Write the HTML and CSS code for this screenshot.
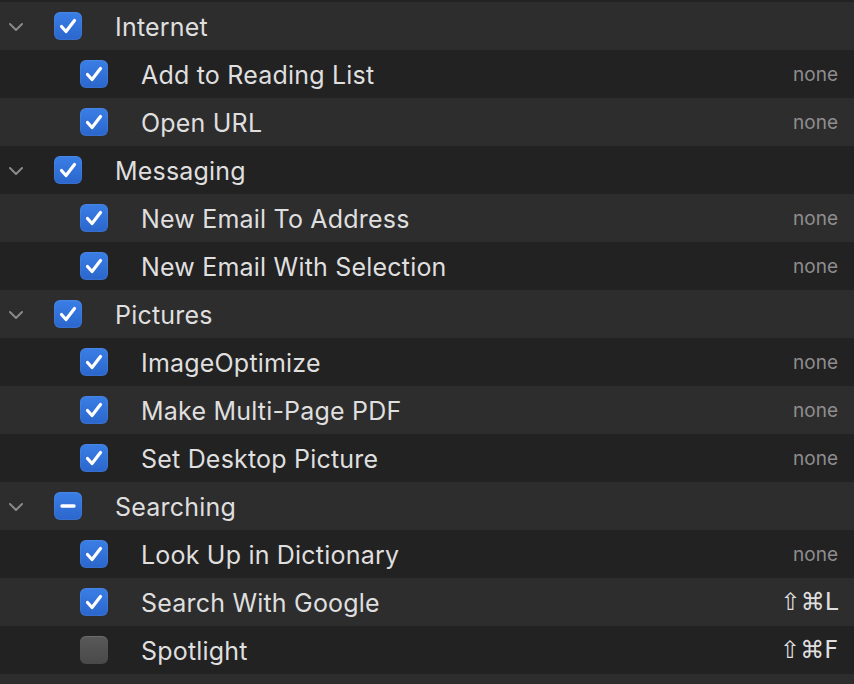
FILE: index.html
```html
<!DOCTYPE html>
<html>
<head>
<meta charset="utf-8">
<link rel="stylesheet" href="styles.css">
</head>
<body>
<div class="list">
  <div class="row light group">
    <svg class="chev" viewBox="0 0 16 10" width="16" height="10"><path d="M2 2 L8 8 L14 2" fill="none" stroke="#8a8a8a" stroke-width="2" stroke-linecap="round" stroke-linejoin="round"/></svg>
    <span class="cb on"><svg viewBox="0 0 28 28"><path d="M7.5 14.5 L12 19.5 L20.5 8.5" fill="none" stroke="#fff" stroke-width="3.2" stroke-linecap="round" stroke-linejoin="round"/></svg></span>
    <span class="label">Internet</span>
  </div>
  <div class="row dark child">
    <span class="cb on"><svg viewBox="0 0 28 28"><path d="M7.5 14.5 L12 19.5 L20.5 8.5" fill="none" stroke="#fff" stroke-width="3.2" stroke-linecap="round" stroke-linejoin="round"/></svg></span>
    <span class="label">Add to Reading List</span>
    <span class="key none">none</span>
  </div>
  <div class="row light child">
    <span class="cb on"><svg viewBox="0 0 28 28"><path d="M7.5 14.5 L12 19.5 L20.5 8.5" fill="none" stroke="#fff" stroke-width="3.2" stroke-linecap="round" stroke-linejoin="round"/></svg></span>
    <span class="label">Open URL</span>
    <span class="key none">none</span>
  </div>
  <div class="row dark group">
    <svg class="chev" viewBox="0 0 16 10" width="16" height="10"><path d="M2 2 L8 8 L14 2" fill="none" stroke="#8a8a8a" stroke-width="2" stroke-linecap="round" stroke-linejoin="round"/></svg>
    <span class="cb on"><svg viewBox="0 0 28 28"><path d="M7.5 14.5 L12 19.5 L20.5 8.5" fill="none" stroke="#fff" stroke-width="3.2" stroke-linecap="round" stroke-linejoin="round"/></svg></span>
    <span class="label">Messaging</span>
  </div>
  <div class="row light child">
    <span class="cb on"><svg viewBox="0 0 28 28"><path d="M7.5 14.5 L12 19.5 L20.5 8.5" fill="none" stroke="#fff" stroke-width="3.2" stroke-linecap="round" stroke-linejoin="round"/></svg></span>
    <span class="label">New Email To Address</span>
    <span class="key none">none</span>
  </div>
  <div class="row dark child">
    <span class="cb on"><svg viewBox="0 0 28 28"><path d="M7.5 14.5 L12 19.5 L20.5 8.5" fill="none" stroke="#fff" stroke-width="3.2" stroke-linecap="round" stroke-linejoin="round"/></svg></span>
    <span class="label">New Email With Selection</span>
    <span class="key none">none</span>
  </div>
  <div class="row light group">
    <svg class="chev" viewBox="0 0 16 10" width="16" height="10"><path d="M2 2 L8 8 L14 2" fill="none" stroke="#8a8a8a" stroke-width="2" stroke-linecap="round" stroke-linejoin="round"/></svg>
    <span class="cb on"><svg viewBox="0 0 28 28"><path d="M7.5 14.5 L12 19.5 L20.5 8.5" fill="none" stroke="#fff" stroke-width="3.2" stroke-linecap="round" stroke-linejoin="round"/></svg></span>
    <span class="label">Pictures</span>
  </div>
  <div class="row dark child">
    <span class="cb on"><svg viewBox="0 0 28 28"><path d="M7.5 14.5 L12 19.5 L20.5 8.5" fill="none" stroke="#fff" stroke-width="3.2" stroke-linecap="round" stroke-linejoin="round"/></svg></span>
    <span class="label">ImageOptimize</span>
    <span class="key none">none</span>
  </div>
  <div class="row light child">
    <span class="cb on"><svg viewBox="0 0 28 28"><path d="M7.5 14.5 L12 19.5 L20.5 8.5" fill="none" stroke="#fff" stroke-width="3.2" stroke-linecap="round" stroke-linejoin="round"/></svg></span>
    <span class="label">Make Multi-Page PDF</span>
    <span class="key none">none</span>
  </div>
  <div class="row dark child">
    <span class="cb on"><svg viewBox="0 0 28 28"><path d="M7.5 14.5 L12 19.5 L20.5 8.5" fill="none" stroke="#fff" stroke-width="3.2" stroke-linecap="round" stroke-linejoin="round"/></svg></span>
    <span class="label">Set Desktop Picture</span>
    <span class="key none">none</span>
  </div>
  <div class="row light group">
    <svg class="chev" viewBox="0 0 16 10" width="16" height="10"><path d="M2 2 L8 8 L14 2" fill="none" stroke="#8a8a8a" stroke-width="2" stroke-linecap="round" stroke-linejoin="round"/></svg>
    <span class="cb on"><svg viewBox="0 0 28 28"><path d="M8 14 L20 14" fill="none" stroke="#fff" stroke-width="3.4" stroke-linecap="round"/></svg></span>
    <span class="label">Searching</span>
  </div>
  <div class="row dark child">
    <span class="cb on"><svg viewBox="0 0 28 28"><path d="M7.5 14.5 L12 19.5 L20.5 8.5" fill="none" stroke="#fff" stroke-width="3.2" stroke-linecap="round" stroke-linejoin="round"/></svg></span>
    <span class="label">Look Up in Dictionary</span>
    <span class="key none">none</span>
  </div>
  <div class="row light child">
    <span class="cb on"><svg viewBox="0 0 28 28"><path d="M7.5 14.5 L12 19.5 L20.5 8.5" fill="none" stroke="#fff" stroke-width="3.2" stroke-linecap="round" stroke-linejoin="round"/></svg></span>
    <span class="label">Search With Google</span>
    <span class="key shortcut">⇧⌘L</span>
  </div>
  <div class="row dark child">
    <span class="cb off"></span>
    <span class="label">Spotlight</span>
    <span class="key shortcut">⇧⌘F</span>
  </div>
  <div class="row light filler"></div>
</div>
</body>
</html>
```

FILE: styles.css
```css
html, body {
  margin: 0;
  padding: 0;
  background: #232223;
  overflow: hidden;
}
body {
  width: 854px;
  height: 684px;
  font-family: "Inter", "Liberation Sans", sans-serif;
  color: #dfdfdf;
}
.list {
  padding-top: 2px;
  display: flex;
  flex-direction: column;
}
.row {
  height: 48px;
  display: flex;
  align-items: center;
  padding-right: 16px;
  box-sizing: border-box;
  flex: none;
}
.row.light { background: #2e2d2e; }
.row.dark { background: #232223; }
.row.group { padding-left: 8px; }
.row.child { padding-left: 80px; }
.chev {
  width: 16px;
  height: 10px;
  margin-right: 30px;
  margin-top: 1px;
}
.cb {
  width: 28px;
  height: 28px;
  border-radius: 6px;
  box-sizing: border-box;
  flex: none;
  display: flex;
}
.cb svg { width: 28px; height: 28px; }
.cb.on {
  background: linear-gradient(#3a7fe6, #2b66cc);
  box-shadow: inset 0 0 0 1px rgba(255,255,255,0.06);
}
.cb.off {
  background: linear-gradient(#5a595a, #4a494a);
  box-shadow: inset 0 1px 0 rgba(255,255,255,0.12);
}
.label {
  margin-left: 33px;
  font-size: 25px;
  letter-spacing: 0.2px;
  flex: 1;
  white-space: nowrap;
  padding-top: 1px;
}
.key {
  white-space: nowrap;
}
.none {
  color: #8e8d8e;
  font-size: 19px;
}
.shortcut {
  color: #dfdfdf;
  font-size: 24px;
  font-family: "DejaVu Sans", sans-serif;
}
.row.filler { height: 10px; }
```
